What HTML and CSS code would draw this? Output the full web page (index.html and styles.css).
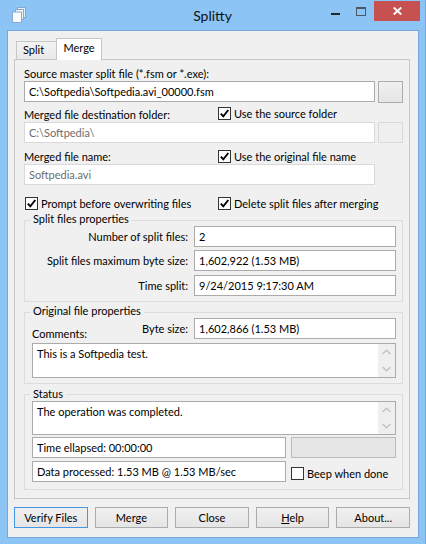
FILE: index.html
```html
<!DOCTYPE html>
<html>
<head>
<meta charset="utf-8">
<title>Splitty</title>
<link rel="stylesheet" href="styles.css">
</head>
<body>
<div class="window">
  <div class="titlebar">
    <div class="tb-left">
      <svg class="app-icon" width="14" height="16" viewBox="0 0 14 16">
        <rect x="5.5" y="0.5" width="8" height="10" fill="#e4eefa" stroke="#8aa8cc"/>
        <rect x="3.5" y="2.5" width="8" height="10" fill="#edf4fc" stroke="#8aa8cc"/>
        <rect x="0.5" y="5" width="9" height="10.5" fill="#f8fbff" stroke="#8aa8cc"/>
      </svg>
    </div>
    <div class="tb-title">Splitty</div>
    <div class="tb-right">
      <div class="ctl ctl-min"><span class="min-bar"></span></div>
      <div class="ctl ctl-max"><span class="max-box"></span></div>
      <div class="ctl ctl-close">
        <svg class="close-x" width="9" height="8" viewBox="0 0 9 8"><path d="M0.7 0.5L8.3 7.5M8.3 0.5L0.7 7.5" stroke="#fff" stroke-width="1.9"/></svg>
      </div>
    </div>
  </div>

  <div class="client">
    <div class="tabstrip">
      <div class="tab tab-split">Split</div>
      <div class="tab tab-active">Merge</div>
    </div>

    <div class="page">
      <div class="lbl lbl-top">Source master split file (*.fsm or *.exe):</div>
      <div class="path-row">
        <div class="edit edit-wide">C:\Softpedia\Softpedia.avi_00000.fsm</div>
        <div class="browse"></div>
      </div>

      <div class="opt-row opt-row-a">
        <div class="lbl opt-lbl">Merged file destination folder:</div>
        <div class="check check-a">
          <span class="box"><svg width="11" height="11" viewBox="0 0 11 11"><path d="M1.8 5.6L4.3 8.3L9.3 2" fill="none" stroke="#000" stroke-width="1.9"/></svg></span>
          <span class="check-txt">Use the source folder</span>
        </div>
      </div>
      <div class="path-row path-row-b">
        <div class="edit edit-wide edit-disabled">C:\Softpedia\</div>
        <div class="browse browse-disabled"></div>
      </div>

      <div class="opt-row opt-row-c">
        <div class="lbl opt-lbl">Merged file name:</div>
        <div class="check check-c">
          <span class="box"><svg width="11" height="11" viewBox="0 0 11 11"><path d="M1.8 5.6L4.3 8.3L9.3 2" fill="none" stroke="#000" stroke-width="1.9"/></svg></span>
          <span class="check-txt">Use the original file name</span>
        </div>
      </div>
      <div class="edit edit-wide edit-disabled">Softpedia.avi</div>

      <div class="opt-row opt-row-d">
        <div class="check check-left">
          <span class="box"><svg width="11" height="11" viewBox="0 0 11 11"><path d="M1.8 5.6L4.3 8.3L9.3 2" fill="none" stroke="#000" stroke-width="1.9"/></svg></span>
          <span class="check-txt">Prompt before overwriting files</span>
        </div>
        <div class="check">
          <span class="box"><svg width="11" height="11" viewBox="0 0 11 11"><path d="M1.8 5.6L4.3 8.3L9.3 2" fill="none" stroke="#000" stroke-width="1.9"/></svg></span>
          <span class="check-txt">Delete split files after merging</span>
        </div>
      </div>

      <div class="group group-split">
        <div class="group-title"><span>Split files properties</span></div>
        <div class="prop-row">
          <div class="prop-lbl">Number of split files:</div>
          <div class="edit">2</div>
        </div>
        <div class="prop-row prop-row-2">
          <div class="prop-lbl">Split files maximum byte size:</div>
          <div class="edit">1,602,922 (1.53 MB)</div>
        </div>
        <div class="prop-row prop-row-3">
          <div class="prop-lbl">Time split:</div>
          <div class="edit">9/24/2015 9:17:30 AM</div>
        </div>
      </div>

      <div class="group group-orig">
        <div class="group-title"><span>Original file properties</span></div>
        <div class="prop-row">
          <div class="prop-lbl prop-lbl-split">
            <span class="comments-lbl">Comments:</span>
            <span>Byte size:</span>
          </div>
          <div class="edit">1,602,866 (1.53 MB)</div>
        </div>
        <div class="memo memo-comments">
          <div class="memo-text">This is a Softpedia test.</div>
          <div class="scroll">
            <div class="arrow"><svg width="9" height="6" viewBox="0 0 9 6"><path d="M0.6 5L4.5 1.2L8.4 5" fill="none" stroke="#c3c3c3" stroke-width="1.5"/></svg></div>
            <div class="arrow"><svg width="9" height="6" viewBox="0 0 9 6"><path d="M0.6 1L4.5 4.8L8.4 1" fill="none" stroke="#c3c3c3" stroke-width="1.5"/></svg></div>
          </div>
        </div>
      </div>

      <div class="group group-status">
        <div class="group-title group-title-status"><span>Status</span></div>
        <div class="memo memo-status">
          <div class="memo-text">The operation was completed.</div>
          <div class="scroll">
            <div class="arrow"><svg width="9" height="6" viewBox="0 0 9 6"><path d="M0.6 5L4.5 1.2L8.4 5" fill="none" stroke="#c3c3c3" stroke-width="1.5"/></svg></div>
            <div class="arrow"><svg width="9" height="6" viewBox="0 0 9 6"><path d="M0.6 1L4.5 4.8L8.4 1" fill="none" stroke="#c3c3c3" stroke-width="1.5"/></svg></div>
          </div>
        </div>
        <div class="stat-row stat-row-1">
          <div class="edit">Time ellapsed: 00:00:00</div>
          <div class="progress"></div>
        </div>
        <div class="stat-row stat-row-2">
          <div class="edit">Data processed: 1.53 MB @ 1.53 MB/sec</div>
          <div class="check check-beep">
            <span class="box"></span>
            <span class="check-txt">Beep when done</span>
          </div>
        </div>
      </div>
    </div>

    <div class="buttons">
      <div class="btn btn-default">Verify Files</div>
      <div class="btn">Merge</div>
      <div class="btn">Close</div>
      <div class="btn"><u>H</u>elp</div>
      <div class="btn">About...</div>
    </div>
  </div>
</div>
</body>
</html>
```

FILE: styles.css
```css
* {
  box-sizing: border-box;
}

html,
body {
  margin: 0;
  padding: 0;
}

body {
  width: 426px;
  height: 544px;
  overflow: hidden;
  font-family: Lato, "Liberation Sans", sans-serif;
  font-size: 11px;
  color: #000;
  background: #8dc4f6;
}

.window {
  width: 426px;
  height: 544px;
  background: #8dc4f6;
  border-right: 1px solid #6ea7df;
  display: flex;
  flex-direction: column;
}

/* ---------- title bar ---------- */
.titlebar {
  height: 30px;
  flex: none;
  display: grid;
  grid-template-columns: 1fr auto 1fr;
}

.tb-left {
  padding: 7px 0 0 12px;
}

.app-icon {
  display: block;
}

.tb-title {
  padding-top: 7px;
  font-size: 14px;
  line-height: 17px;
  color: #111;
}

.tb-right {
  display: flex;
  justify-content: flex-end;
  align-items: flex-start;
  padding-right: 5px;
}

.ctl {
  height: 20px;
  margin-top: 1px;
}

.ctl-min,
.ctl-max {
  width: 26px;
}

.min-bar {
  display: block;
  width: 9px;
  height: 2px;
  margin: 12px auto 0;
  background: #252525;
}

.max-box {
  display: block;
  width: 10px;
  height: 9px;
  margin: 6px auto 0;
  border: 1px solid #4a5866;
  border-top-width: 2px;
}

.ctl-close {
  width: 46px;
  background: #c75050;
}

.close-x {
  display: block;
  margin: 6px auto 0;
}

/* ---------- client area ---------- */
.client {
  height: 508px;
  margin: 0 6px 0 7px;
  border: 1px solid #74a8dc;
  background: #f0f0f0;
  padding: 7px 8px 0 6px;
}

.tabstrip {
  display: flex;
  align-items: flex-end;
  height: 21px;
  margin-left: 2px;
}

.tab {
  border: 1px solid #c6c6c6;
  border-bottom: none;
}

.tab-split {
  width: 40px;
  height: 18px;
  border-right: none;
  padding-left: 6px;
  line-height: 16px;
  background: linear-gradient(#f3f3f3, #e9e9e9);
}

.tab-active {
  width: 46px;
  height: 22px;
  margin-bottom: -1px;
  position: relative;
  z-index: 1;
  background: #fff;
  text-align: center;
  line-height: 17px;
}

.page {
  width: 396px;
  border: 1px solid #c6c6c6;
  background: #f0f0f0;
  padding: 5px 6px 8px 9px;
}

.lbl {
  line-height: 15px;
  white-space: nowrap;
}

.lbl-top {
  height: 16px;
  line-height: 17px;
}

.path-row {
  display: flex;
  gap: 3px;
  height: 22px;
}

.path-row-b {
  height: 21px;
}

.edit {
  height: 21px;
  border: 1px solid #ababab;
  background: #fff;
  padding: 0 4px;
  line-height: 19px;
  white-space: nowrap;
  overflow: hidden;
}

.edit-wide {
  width: 351px;
}

.edit-disabled {
  border-color: #d9d9d9;
  color: #6d6d6d;
}

.browse {
  width: 25px;
  height: 22px;
  border: 1px solid #acacac;
  background: linear-gradient(#f0f0f0, #e5e5e5);
}

.browse-disabled {
  height: 21px;
  border-color: #d9d9d9;
  background: #efefef;
}

.opt-row {
  display: grid;
  grid-template-columns: 194px 1fr;
}

.opt-row-a {
  height: 19px;
}

.opt-row-c {
  height: 21px;
}

.opt-lbl {
  align-self: end;
}

.check-a {
  align-self: start;
  margin-top: 4px;
}

.check-c {
  align-self: start;
  margin-top: 7px;
}

.opt-row-d {
  height: 13px;
  margin-top: 12px;
}

.check {
  display: flex;
  align-items: center;
  height: 13px;
  white-space: nowrap;
}

.check-left {
  margin-left: 1px;
}

.box {
  width: 13px;
  height: 13px;
  flex: none;
  border: 1px solid #333;
  background: #fff;
  margin-right: 3px;
}

.box svg {
  display: block;
}

.check-txt {
  line-height: 13px;
}

/* ---------- group boxes ---------- */
.group {
  width: 379px;
  margin-top: 10px;
  border: 1px solid #dcdcdc;
  padding: 0 6px 5px 0;
}

.group-status {
  padding-bottom: 7px;
}

.group-title {
  display: flow-root;
  height: 5px;
}

.group-title span {
  display: block;
  width: fit-content;
  margin: -10px 0 0 5px;
  padding: 0 3px;
  line-height: 15px;
  background: #f0f0f0;
  white-space: nowrap;
}

.group-title-status {
  height: 6px;
}

.group-title-status span {
  margin-top: -9px;
}

.prop-row {
  display: grid;
  grid-template-columns: 163px 202px;
  column-gap: 6px;
  align-items: center;
}

.prop-row-2 {
  margin-top: 3px;
}

.prop-row-3 {
  margin-top: 4px;
}

.prop-lbl {
  text-align: right;
  line-height: 15px;
  white-space: nowrap;
}

.prop-lbl-split {
  align-self: stretch;
  display: flex;
  justify-content: space-between;
  align-items: center;
}

.comments-lbl {
  align-self: flex-end;
  margin-left: 7px;
  margin-bottom: -2px;
}

.memo {
  display: flex;
  width: 364px;
  margin-left: 7px;
  border: 1px solid #ababab;
  background: #fff;
}

.memo-comments {
  height: 35px;
  margin-top: 4px;
}

.memo-status {
  height: 34px;
}

.memo-text {
  flex: 1;
  padding: 2px 4px;
  line-height: 15px;
}

.scroll {
  width: 17px;
  display: flex;
  flex-direction: column;
  background: #efefef;
}

.arrow {
  flex: 1;
  display: flex;
  align-items: center;
  justify-content: center;
}

.arrow svg {
  display: block;
}

.stat-row {
  display: grid;
  grid-template-columns: 254px 105px;
  column-gap: 5px;
  margin-left: 7px;
}

.stat-row-1 {
  margin-top: 2px;
}

.stat-row-2 {
  margin-top: 3px;
}

.progress {
  height: 21px;
  border: 1px solid #bcbcbc;
  background: #e6e6e6;
}

.check-beep {
  align-self: start;
  margin-top: 6px;
}

/* ---------- bottom buttons ---------- */
.buttons {
  display: flex;
  gap: 7px;
  margin-top: 8px;
}

.btn {
  width: 74px;
  height: 21px;
  border: 1px solid #acacac;
  background: linear-gradient(#f0f0f0, #e5e5e5);
  text-align: center;
  line-height: 19px;
  white-space: nowrap;
}

.btn-default {
  border-color: #4596e6;
}
```
